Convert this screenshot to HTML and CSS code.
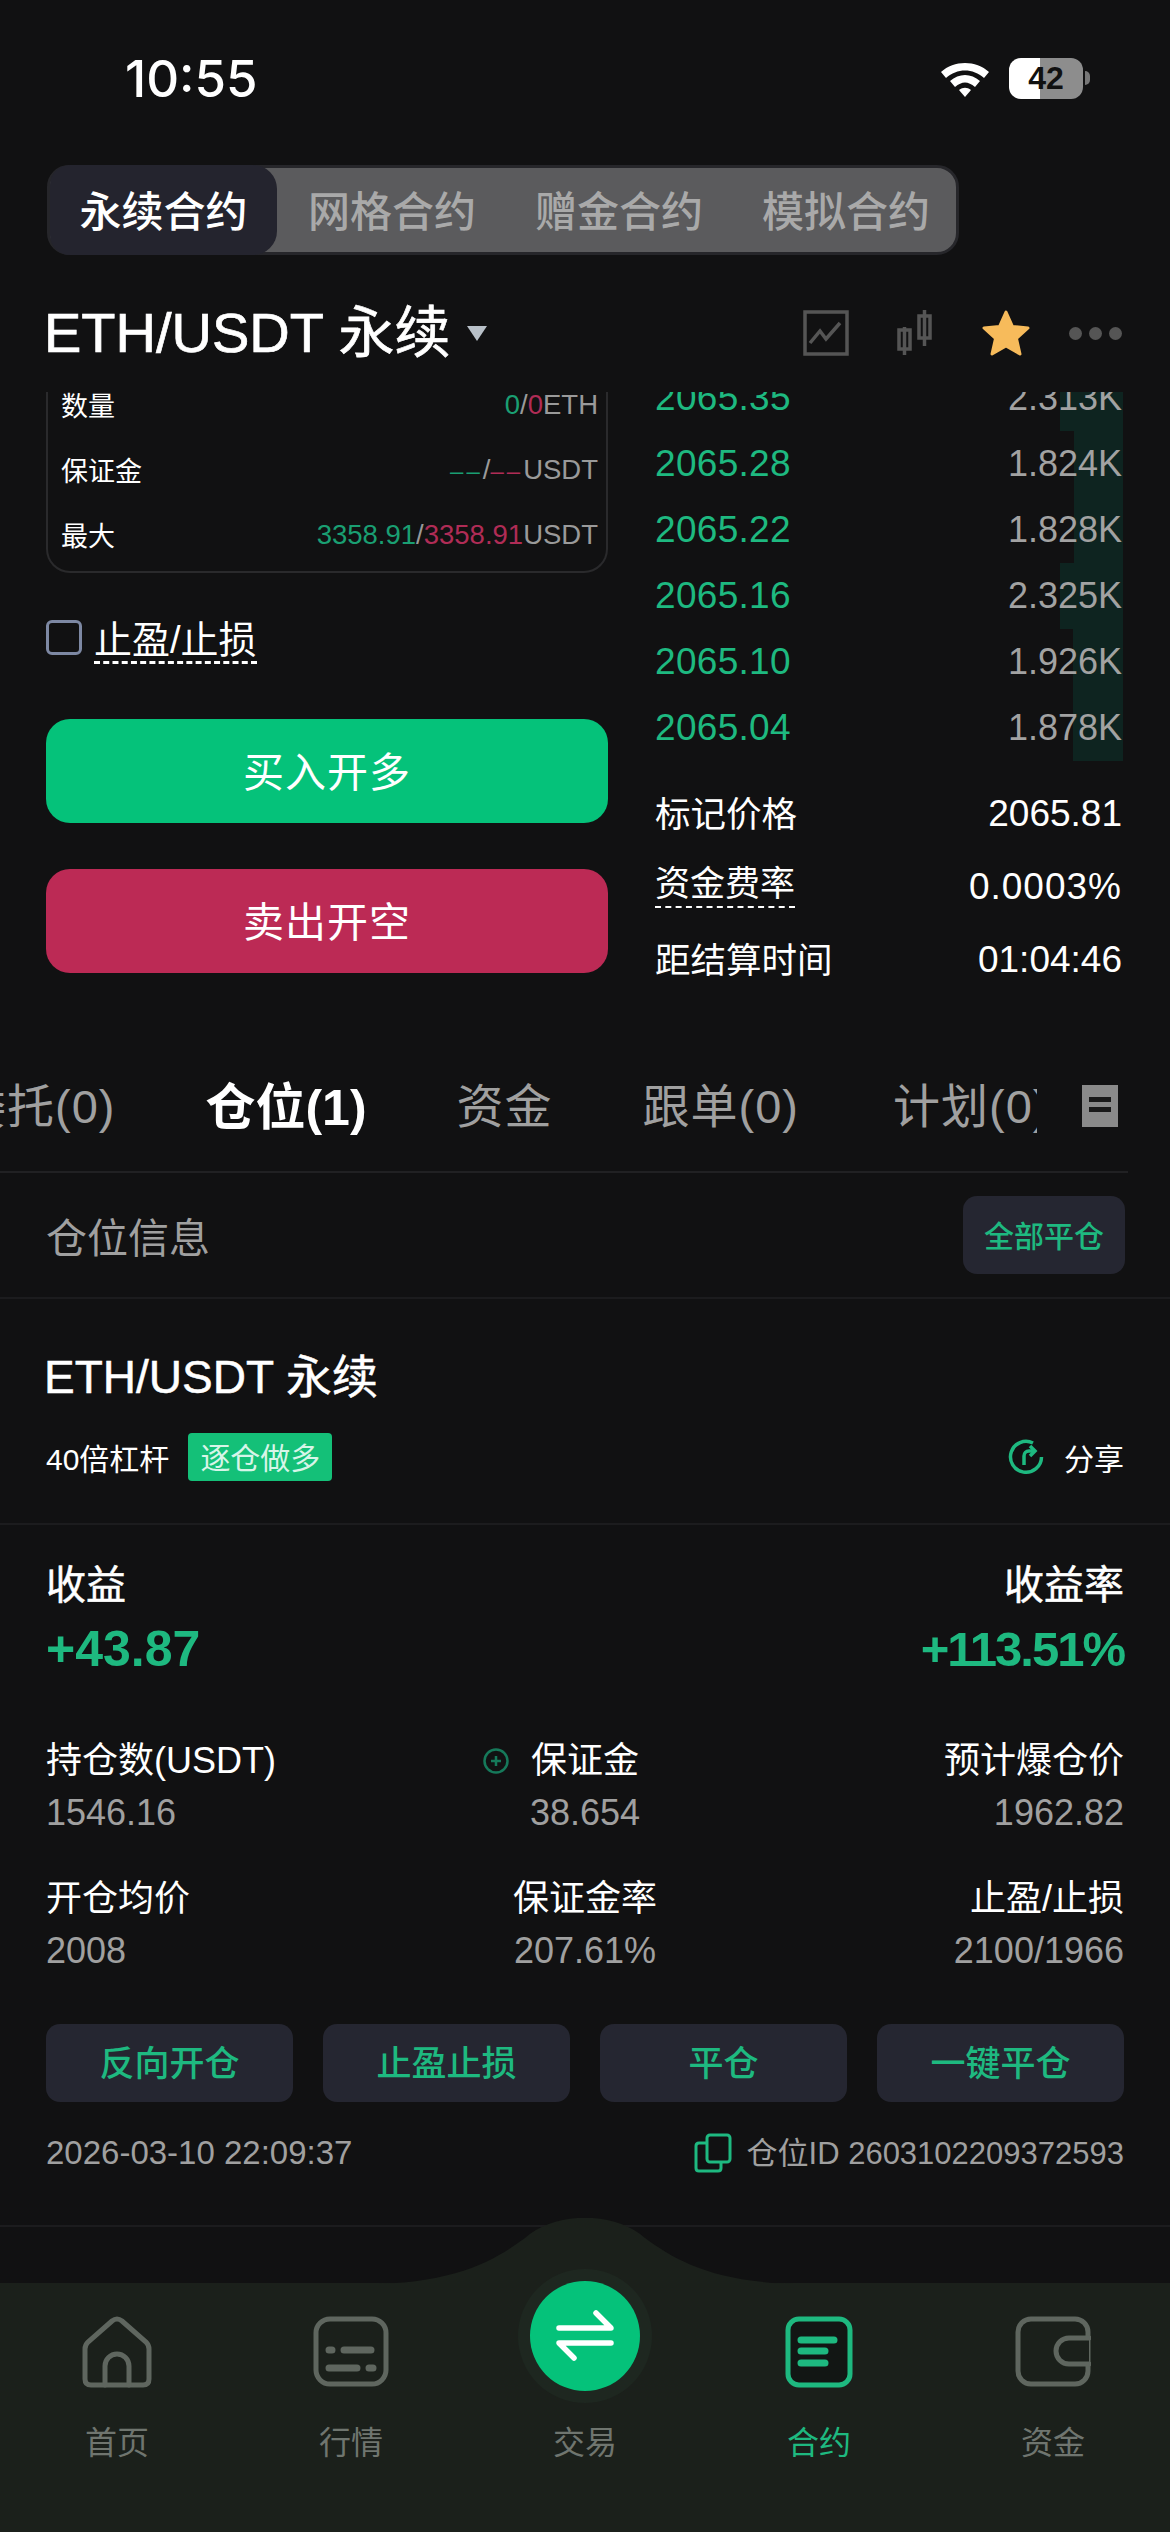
FILE: index.html
```html
<!doctype html>
<html lang="zh-CN">
    <head>
        <meta charset="UTF-8" />
        <meta name="viewport" content="width=device-width, initial-scale=1.0" />
        <title>合约 - ETH/USDT 永续</title>
        <link rel="stylesheet" href="styles.css">
    </head>
    <body>
        <div class="status-bar">
            <span class="clock">10:55</span>
            <svg class="wifi" viewBox="0 0 52 38">
                <path d="M2 13 C15 1 37 1 50 13 L45 19 C34 9 18 9 7 19 Z"></path>
                <path d="M11 22 C20 14 32 14 41 22 L36 28 C29 22 23 22 16 28 Z"></path>
                <path d="M20 31 C24 28 28 28 32 31 L26 38 Z"></path>
            </svg>
            <span class="battery">42</span>
            <span class="battery-nub"></span>
        </div>

        <div class="segment">
            <span class="segment-item active">永续合约</span>
            <span class="segment-item">网格合约</span>
            <span class="segment-item">赠金合约</span>
            <span class="segment-item">模拟合约</span>
        </div>

        <div class="pair-bar">
            <span class="pair-name">ETH/USDT 永续</span>
            <span class="caret"></span>
            <div class="pair-tools">
                <svg class="tool-chart" viewBox="0 0 46 46">
                    <rect x="2" y="2" width="42" height="42"></rect>
                    <path d="M7 33 L17 21 L23 29 L37 13"></path>
                </svg>
                <svg class="tool-candle" viewBox="0 0 38 46">
                    <rect x="3" y="20" width="11" height="19"></rect>
                    <path d="M8.5 17 V45"></path>
                    <rect x="23" y="6" width="11" height="22"></rect>
                    <path d="M28.5 0 V36"></path>
                </svg>
                <svg class="tool-star" viewBox="0 0 50 48">
                    <path d="M25 3 L31.5 17.5 L47 19 L35.5 29.5 L39 45 L25 37 L11 45 L14.5 29.5 L3 19 L18.5 17.5 Z"></path>
                </svg>
                <div class="tool-dots">
                    <span></span>
                    <span></span>
                    <span></span>
                </div>
            </div>
        </div>

        <div class="trade">
            <div class="order-form">
                <div class="form-card">
                    <div class="form-row">
                        <span>数量</span>
                        <span class="form-value"><i class="up">0</i>/<i class="down">0</i>ETH</span>
                    </div>
                    <div class="form-row">
                        <span>保证金</span>
                        <span class="form-value"><i class="up dash">––</i>/<i class="down dash">––</i>USDT</span>
                    </div>
                    <div class="form-row">
                        <span>最大</span>
                        <span class="form-value"><i class="up">3358.91</i>/<i class="down">3358.91</i>USDT</span>
                    </div>
                </div>
                <div class="tp-sl">
                    <span class="checkbox"></span>
                    <span class="dashed">止盈/止损</span>
                </div>
                <div class="btn-buy">买入开多</div>
                <div class="btn-sell">卖出开空</div>
            </div>

            <div class="book">
                <div class="book-row"><span class="bar" style="width: 63px"></span><span class="price">2065.35</span><span class="qty">2.313K</span></div>
                <div class="book-row"><span class="bar" style="width: 49px"></span><span class="price">2065.28</span><span class="qty">1.824K</span></div>
                <div class="book-row"><span class="bar" style="width: 49px"></span><span class="price">2065.22</span><span class="qty">1.828K</span></div>
                <div class="book-row"><span class="bar" style="width: 63px"></span><span class="price">2065.16</span><span class="qty">2.325K</span></div>
                <div class="book-row"><span class="bar" style="width: 50px"></span><span class="price">2065.10</span><span class="qty">1.926K</span></div>
                <div class="book-row"><span class="bar" style="width: 50px"></span><span class="price">2065.04</span><span class="qty">1.878K</span></div>

                <div class="info-list">
                    <div class="info-row"><span class="info-label">标记价格</span><span>2065.81</span></div>
                    <div class="info-row"><span class="info-label dashed thin">资金费率</span><span class="wide">0.0003%</span></div>
                    <div class="info-row"><span class="info-label">距结算时间</span><span>01:04:46</span></div>
                </div>
            </div>
        </div>

        <div class="tab-bar">
            <div class="tab-scroll">
                <div class="tab-list">
                    <span class="tab">委托(0)</span>
                    <span class="tab active">仓位(1)</span>
                    <span class="tab">资金</span>
                    <span class="tab">跟单(0)</span>
                    <span class="tab">计划(0)</span>
                </div>
            </div>
            <span class="tab-doc"></span>
        </div>

        <div class="section-head">
            <span class="section-title">仓位信息</span>
            <span class="close-all">全部平仓</span>
        </div>

        <div class="position-head">
            <div class="position-name">ETH/USDT 永续</div>
            <div class="position-meta">
                <span class="leverage">40倍杠杆</span>
                <span class="side-tag">逐仓做多</span>
                <span class="share">
                    <svg class="share-icon" viewBox="0 0 36 36">
                        <path d="M25 4 A15.5 15.5 0 1 0 33.5 18"></path>
                        <path d="M16 26 V17 C16 14 18 12 21 12 H26"></path>
                        <path d="M22 7 L27 12 L22 17"></path>
                    </svg>
                    分享
                </span>
            </div>
        </div>

        <div class="position">
            <div class="pnl">
                <div>
                    <div class="pnl-label">收益</div>
                    <div class="pnl-value">+43.87</div>
                </div>
                <div class="to-right">
                    <div class="pnl-label">收益率</div>
                    <div class="pnl-value tight">+113.51%</div>
                </div>
            </div>

            <div class="stats">
                <div>
                    <div class="stat-label">持仓数(USDT)</div>
                    <div class="stat-value">1546.16</div>
                </div>
                <div class="to-center">
                    <div class="stat-label with-icon">
                        <svg class="plus-icon" viewBox="0 0 26 26">
                            <circle cx="13" cy="13" r="11.5"></circle>
                            <path d="M13 8 V18 M8 13 H18"></path>
                        </svg>
                        保证金
                    </div>
                    <div class="stat-value">38.654</div>
                </div>
                <div class="to-right">
                    <div class="stat-label">预计爆仓价</div>
                    <div class="stat-value">1962.82</div>
                </div>
                <div>
                    <div class="stat-label">开仓均价</div>
                    <div class="stat-value">2008</div>
                </div>
                <div class="to-center">
                    <div class="stat-label">保证金率</div>
                    <div class="stat-value">207.61%</div>
                </div>
                <div class="to-right">
                    <div class="stat-label">止盈/止损</div>
                    <div class="stat-value">2100/1966</div>
                </div>
            </div>

            <div class="actions">
                <span class="action">反向开仓</span>
                <span class="action">止盈止损</span>
                <span class="action">平仓</span>
                <span class="action">一键平仓</span>
            </div>

            <div class="position-foot">
                <span class="open-time">2026-03-10 22:09:37</span>
                <span class="position-id">
                    <svg class="copy-icon" viewBox="0 0 38 40">
                        <rect x="13" y="2" width="23" height="27" rx="3"></rect>
                        <path d="M13 10 H5 Q2 10 2 13 V35 Q2 38 5 38 H24 Q27 38 27 35 V29"></path>
                    </svg>
                    <span class="id-text">仓位ID 2603102209372593</span>
                </span>
            </div>
        </div>

        <nav class="nav">
            <svg class="nav-hump" viewBox="0 0 440 66">
                <path d="M0 66 C90 66 130 42 160 20 C190 -7 250 -7 280 20 C310 42 350 66 440 66 Z"></path>
            </svg>
            <div class="nav-item">
                <svg class="nav-icon" viewBox="0 0 72 72">
                    <path d="M4 33 Q4 29 7 26 L31 5 Q36 1 41 5 L65 26 Q68 29 68 33 V63 Q68 69 62 69 H10 Q4 69 4 63 Z"></path>
                    <path d="M24 69 V50 A12 12 0 0 1 48 50 V69"></path>
                </svg>
                <span>首页</span>
            </div>
            <div class="nav-item">
                <svg class="nav-icon" viewBox="0 0 76 72">
                    <rect x="3" y="3" width="70" height="65" rx="14"></rect>
                    <path class="thick" d="M16 34 H19 M31 34 H58 M16 52 H44 M56 52 H60"></path>
                </svg>
                <span>行情</span>
            </div>
            <div class="nav-item">
                <div class="nav-spacer"></div>
                <span>交易</span>
            </div>
            <div class="nav-item active">
                <svg class="nav-icon" viewBox="0 0 68 72">
                    <rect class="doc" x="3" y="3" width="62" height="66" rx="11"></rect>
                    <path class="thick" d="M16 24 H49 M16 35 H40 M16 47 H40"></path>
                </svg>
                <span>合约</span>
            </div>
            <div class="nav-item">
                <svg class="nav-icon" viewBox="0 0 76 72">
                    <rect x="3" y="3" width="70" height="65" rx="13"></rect>
                    <path class="clasp" d="M74 22 H54 A13 13 0 0 0 54 48 H74"></path>
                </svg>
                <span>资金</span>
            </div>
            <div class="swap-halo">
                <div class="swap-btn">
                    <svg class="swap-icon" viewBox="0 0 62 62">
                        <path d="M5 23 H57 L42 8 M57 38 H5 L20 53"></path>
                    </svg>
                </div>
            </div>
        </nav>
    </body>
</html>
```

FILE: styles.css
```css
* {
    margin: 0;
    padding: 0;
    box-sizing: border-box;
}

body {
    width: 1170px;
    height: 2532px;
    overflow: hidden;
    display: flex;
    flex-direction: column;
    background: #111112;
    color: #fff;
    font-family: "Liberation Sans", "Noto Sans CJK SC", sans-serif;
}

i {
    font-style: normal;
}

.up {
    color: #1a9f72;
}

.down {
    color: #b02c56;
}

.dash {
    font-size: 24px;
    letter-spacing: 3px;
}

/* status bar */
.status-bar {
    height: 154px;
    flex-shrink: 0;
    display: flex;
    align-items: center;
    padding: 2px 80px 0 125px;
}

.clock {
    font-family: Inter, sans-serif;
    font-size: 51px;
    font-weight: 500;
    margin-right: auto;
}

.wifi {
    width: 52px;
    height: 38px;
    fill: #fff;
}

.battery {
    width: 74px;
    height: 41px;
    margin-left: 18px;
    border-radius: 12px;
    background: linear-gradient(90deg, #fff 42%, #8d8d8d 42%);
    color: #111;
    font-size: 32px;
    font-weight: 700;
    line-height: 41px;
    text-align: center;
}

.battery-nub {
    width: 5px;
    height: 14px;
    margin-left: 2px;
    border-radius: 0 5px 5px 0;
    background: #777;
}

/* contract type switch */
.segment {
    width: 912px;
    height: 90px;
    flex-shrink: 0;
    margin: 11px 0 0 47px;
    display: flex;
    padding: 3px;
    gap: 3px;
    background: #5b5b5d;
    border: 3px solid #26262a;
    border-radius: 22px;
}

.segment-item {
    width: 224px;
    flex-shrink: 0;
    display: flex;
    align-items: center;
    justify-content: center;
    padding-bottom: 3px;
    color: #a9a9a9;
    font-size: 42px;
    font-weight: 500;
}

.segment-item.active {
    width: 227px;
    margin: -6px 0 -6px -3px;
    border-radius: 20px 24px 24px 20px;
    background: #24242e;
    color: #fff;
}

/* pair title */
.pair-bar {
    height: 137px;
    flex-shrink: 0;
    display: flex;
    align-items: center;
    padding: 19px 48px 0 44px;
}

.pair-name {
    margin-bottom: 12px;
    font-size: 56px;
    -webkit-text-stroke: 0.7px #fff;
}

.caret {
    margin: 0 0 0 16px;
    border-top: 15px solid #b8c0c8;
    border-left: 10px solid transparent;
    border-right: 10px solid transparent;
}

.pair-tools {
    margin-left: auto;
    display: flex;
    align-items: center;
    gap: 47px;
}

.tool-chart,
.tool-candle {
    fill: none;
    stroke: #555;
    stroke-width: 3.5;
}

.tool-chart {
    width: 46px;
    height: 46px;
}

.tool-candle {
    width: 38px;
    height: 46px;
}

.tool-star {
    width: 50px;
    height: 48px;
    fill: #f7bb5b;
    stroke: #f7bb5b;
    stroke-width: 3;
    stroke-linejoin: round;
}

.tool-dots {
    display: flex;
    gap: 7px;
    margin-left: -9px;
}

.tool-dots span {
    width: 13px;
    height: 13px;
    border-radius: 50%;
    background: #555;
}

/* order form and book */
.trade {
    height: 648px;
    flex-shrink: 0;
    overflow: hidden;
    display: flex;
    gap: 47px;
    padding: 0 48px 0 46px;
}

.order-form {
    width: 562px;
    flex-shrink: 0;
}

.form-card {
    margin-top: -20px;
    padding: 0 8px 4px 13px;
    border: 2px solid #2a2a2c;
    border-top: none;
    border-radius: 0 0 24px 24px;
}

.form-row {
    height: 65px;
    display: flex;
    align-items: center;
    justify-content: space-between;
    font-size: 27px;
}

.form-value {
    color: #9a9a9a;
    font-size: 27.5px;
}

.tp-sl {
    height: 44px;
    margin-top: 47px;
    display: flex;
    align-items: flex-start;
    gap: 12px;
}

.checkbox {
    width: 36px;
    height: 35px;
    border: 3px solid #7d88a3;
    border-radius: 6px;
}

.dashed {
    font-size: 38px;
    line-height: 41px;
    border-bottom: 3px dashed #fff;
}

.dashed.thin {
    font-size: 35px;
    line-height: 44px;
    border-bottom-width: 2px;
}

.btn-buy,
.btn-sell {
    height: 104px;
    display: flex;
    align-items: center;
    justify-content: center;
    padding-bottom: 5px;
    border-radius: 24px;
    font-size: 41px;
    letter-spacing: 1px;
}

.btn-buy {
    margin-top: 55px;
    background: #05c27a;
}

.btn-sell {
    margin-top: 46px;
    background: #bc2a55;
}

.book {
    flex: 1;
    margin-top: -27px;
}

.book-row {
    position: relative;
    height: 66px;
    display: flex;
    align-items: center;
    justify-content: space-between;
}

.bar {
    position: absolute;
    top: 0;
    right: -1px;
    bottom: 0;
    background: #0e2420;
}

.price {
    position: relative;
    color: #1eb980;
    font-size: 37px;
    letter-spacing: 0.3px;
}

.qty {
    position: relative;
    color: #a2a2a2;
    font-size: 36px;
}

.info-list {
    margin-top: 16px;
}

.info-row {
    height: 73px;
    display: flex;
    align-items: center;
    justify-content: space-between;
    font-size: 37px;
}

.info-label {
    margin-bottom: 4px;
    font-size: 35.5px;
}

.wide {
    letter-spacing: 1px;
}

/* list tabs */
.tab-bar {
    width: 1128px;
    height: 133px;
    flex-shrink: 0;
    display: flex;
    align-items: center;
    border-bottom: 2px solid #212123;
}

.tab-scroll {
    width: 1037px;
    padding-bottom: 6px;
    overflow: hidden;
}

.tab-list {
    margin-left: -41px;
    display: flex;
    align-items: center;
    gap: 90px;
    white-space: nowrap;
}

.tab {
    color: #a0a0a0;
    font-size: 47px;
    letter-spacing: 1px;
}

.tab:last-child {
    margin-left: 4px;
}

.tab.active {
    color: #fff;
    font-size: 50px;
    font-weight: 700;
    letter-spacing: 0;
}

.tab-doc {
    width: 36px;
    height: 42px;
    margin-left: 45px;
    flex-shrink: 0;
    background: linear-gradient(#8a8a8a 12px, #1a1a1a 12px, #1a1a1a 17px, #8a8a8a 17px, #8a8a8a 22px, #1a1a1a 22px, #1a1a1a 27px, #8a8a8a 27px);
    background-size: 22px 100%;
    background-position: center;
    background-repeat: no-repeat;
    background-color: #8a8a8a;
}

.section-head {
    height: 126px;
    flex-shrink: 0;
    display: flex;
    align-items: center;
    justify-content: space-between;
    padding: 0 45px 0 46px;
    border-bottom: 2px solid #1c1c1e;
}

.section-title {
    color: #a0a0a0;
    font-size: 41px;
}

.close-all {
    width: 162px;
    height: 78px;
    display: flex;
    align-items: center;
    justify-content: center;
    padding-bottom: 3px;
    border-radius: 14px;
    background: #252631;
    color: #1eb980;
    font-size: 30px;
    font-weight: 500;
}

/* position card */
.position-head {
    height: 226px;
    flex-shrink: 0;
    padding: 0 46px;
    border-bottom: 2px solid #1c1c1e;
}

.position-name {
    height: 156px;
    margin-left: -2px;
    padding-top: 48px;
    font-size: 46px;
    line-height: 60px;
    -webkit-text-stroke: 0.5px #fff;
}

.position-meta {
    margin-top: -22px;
    display: flex;
    align-items: center;
    font-size: 30px;
}

.side-tag {
    height: 48px;
    margin-left: 19px;
    padding: 0 12px 2px;
    display: flex;
    align-items: center;
    border-radius: 4px;
    background: #14c078;
    color: #d7f5e8;
}

.share {
    margin-left: auto;
    display: flex;
    align-items: center;
    gap: 20px;
}

.share-icon {
    width: 36px;
    height: 36px;
    fill: none;
    stroke: #1eb980;
    stroke-width: 3.5;
}

.position {
    height: 702px;
    flex-shrink: 0;
    padding: 30px 46px 0;
    border-bottom: 2px solid #1c1c1e;
}

.pnl {
    display: flex;
    justify-content: space-between;
}

.pnl-label {
    font-size: 40px;
    line-height: 60px;
    -webkit-text-stroke: 0.5px #fff;
}

.pnl-value {
    color: #1eb980;
    font-size: 50px;
    font-weight: 700;
    line-height: 68px;
}

.pnl-value.tight {
    font-size: 49px;
    letter-spacing: -2px;
}

.to-right {
    text-align: right;
}

.to-center {
    text-align: center;
}

.stats {
    margin-top: 52px;
    display: grid;
    grid-template-columns: repeat(3, 1fr);
    row-gap: 34px;
}

.stat-label {
    font-size: 36px;
    line-height: 52px;
}

.stat-label.with-icon {
    position: relative;
}

.plus-icon {
    width: 26px;
    height: 26px;
    position: absolute;
    left: 78px;
    top: 13px;
    fill: none;
    stroke: #16795a;
    stroke-width: 2.5;
}

.stat-value {
    color: #a0a0a0;
    font-size: 36px;
    line-height: 52px;
}

.actions {
    margin-top: 47px;
    display: grid;
    grid-template-columns: repeat(4, 1fr);
    gap: 30px;
}

.action {
    height: 78px;
    display: flex;
    align-items: center;
    justify-content: center;
    padding-bottom: 5px;
    border-radius: 14px;
    background: #252631;
    color: #1eb980;
    font-size: 35px;
    font-weight: 500;
}

.position-foot {
    height: 40px;
    margin-top: 31px;
    display: flex;
    align-items: center;
    justify-content: space-between;
    color: #a0a0a0;
}

.open-time {
    font-size: 33px;
}

.position-id {
    display: flex;
    align-items: center;
    gap: 15px;
    font-size: 31px;
}

.id-text {
    margin-bottom: 5px;
}

.copy-icon {
    width: 38px;
    height: 40px;
    fill: none;
    stroke: #1eb980;
    stroke-width: 3;
}

/* bottom nav */
.nav {
    position: relative;
    margin-top: auto;
    height: 249px;
    flex-shrink: 0;
    display: grid;
    grid-template-columns: repeat(5, 234px);
    padding-top: 33px;
    background: #1b201b;
}

.nav-hump {
    position: absolute;
    left: 365px;
    top: -65px;
    width: 440px;
    height: 66px;
    fill: #1b201b;
}

.nav-item {
    display: flex;
    flex-direction: column;
    align-items: center;
    color: #6f756f;
    font-size: 32px;
    line-height: 40px;
}

.nav-item span {
    margin-top: 35px;
}

.nav-item.active {
    color: #1eb980;
}

.nav-icon {
    height: 72px;
    fill: none;
    stroke: #5f665f;
    stroke-width: 5;
    stroke-linecap: round;
}

.nav-icon .thick {
    stroke-width: 7;
}

.nav-icon .clasp {
    fill: #1b201b;
}

.nav-item.active .nav-icon {
    stroke: #1eb980;
}

.nav-icon .doc {
    fill: #121614;
}

.nav-spacer {
    height: 72px;
}

.swap-halo {
    position: absolute;
    left: 518px;
    top: -14px;
    width: 134px;
    height: 134px;
    display: flex;
    align-items: center;
    justify-content: center;
    border-radius: 50%;
    background: #1e2720;
}

.swap-btn {
    width: 110px;
    height: 110px;
    display: flex;
    align-items: center;
    justify-content: center;
    border-radius: 50%;
    background: #05c27a;
}

.swap-icon {
    width: 62px;
    height: 62px;
    fill: none;
    stroke: #fff;
    stroke-width: 5.5;
    stroke-linecap: round;
    stroke-linejoin: round;
}
```
